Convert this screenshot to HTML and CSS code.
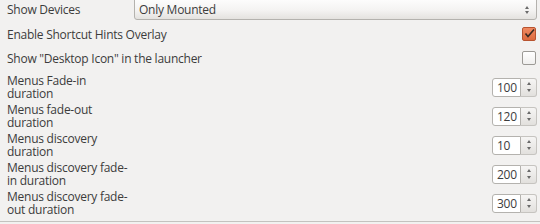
FILE: index.html
```html
<!DOCTYPE html>
<html lang="en">
<head>
    <meta charset="UTF-8">
    <title>Launcher settings</title>
    <link rel="stylesheet" href="styles.css">
</head>
<body>
    <div class="panel">

        <div class="row row-combo">
            <span class="label">Show Devices</span>
            <div class="combo">
                <span>Only Mounted</span>
                <span class="arrows"><i class="up"></i><i class="down"></i></span>
            </div>
        </div>

        <div class="row row-check">
            <span class="label wide">Enable Shortcut Hints Overlay</span>
            <span class="check on">
                <svg width="12" height="12" viewBox="0 0 12 12"><path d="M2.5 5.5 L5 8.5 L11 1.5" fill="none" stroke="#3a2a22" stroke-width="1.6"/></svg>
            </span>
        </div>

        <div class="row row-check">
            <span class="label wide">Show "Desktop Icon" in the launcher</span>
            <span class="check"></span>
        </div>

        <div class="row row-spin">
            <span class="label">Menus Fade-in duration</span>
            <div class="spin"><span class="val">100</span><span class="arrows"><i class="up"></i><i class="down"></i></span></div>
        </div>

        <div class="row row-spin">
            <span class="label">Menus fade-out duration</span>
            <div class="spin"><span class="val">120</span><span class="arrows"><i class="up"></i><i class="down"></i></span></div>
        </div>

        <div class="row row-spin">
            <span class="label">Menus discovery duration</span>
            <div class="spin"><span class="val">10</span><span class="arrows"><i class="up"></i><i class="down"></i></span></div>
        </div>

        <div class="row row-spin">
            <span class="label">Menus discovery fade-in duration</span>
            <div class="spin"><span class="val">200</span><span class="arrows"><i class="up"></i><i class="down"></i></span></div>
        </div>

        <div class="row row-spin">
            <span class="label">Menus discovery fade-out duration</span>
            <div class="spin"><span class="val">300</span><span class="arrows"><i class="up"></i><i class="down"></i></span></div>
        </div>

    </div>
</body>
</html>
```

FILE: styles.css
```css
body {
    margin: 0;
    background-color: #f2f1f0;
    font-family: "Open Sans", "DejaVu Sans", sans-serif;
    font-size: 12px;
    letter-spacing: -0.25px;
    color: #3c3c3c;
}

.panel {
    height: 221px;
    border-bottom: 1px solid #c4c2bf;
    padding: 0 3px 0 7px;
    overflow: hidden;
}

.row {
    display: flex;
    align-items: center;
    justify-content: space-between;
}

.label {
    width: 121px;
    line-height: 13px;
}

.label.wide {
    width: auto;
}

.row-combo {
    height: 22px;
    align-items: flex-start;
}

.row-combo .label {
    padding-top: 3px;
}

.row-check {
    height: 24px;
}

.row-spin {
    height: 29px;
}

.row-check + .row-spin {
    margin-top: 2px;
}

/* dropdown */
.combo {
    flex: 1;
    margin-left: 6px;
    margin-top: -4px;
    height: 24px;
    box-sizing: border-box;
    border: 1px solid #b4b2ae;
    border-radius: 3px;
    background: linear-gradient(#ffffff, #f4f3f2 60%, #e4e2df);
    display: flex;
    align-items: center;
    justify-content: space-between;
    padding: 3px 7px 0 4px;
}

.arrows {
    display: flex;
    flex-direction: column;
    align-items: center;
    gap: 2px;
}

.arrows i {
    display: block;
    width: 0;
    height: 0;
    border-left: 2.5px solid transparent;
    border-right: 2.5px solid transparent;
}

.arrows .up {
    border-bottom: 3px solid #6a6a6a;
}

.arrows .down {
    border-top: 3px solid #6a6a6a;
}

/* checkboxes */
.check {
    width: 14px;
    height: 14px;
    box-sizing: border-box;
    border: 1px solid #9c9a96;
    border-radius: 2px;
    background: linear-gradient(#ffffff, #f0efee);
    display: flex;
    align-items: center;
    justify-content: center;
    margin-right: 1px;
}

.check.on {
    border-color: #b8532f;
    background: linear-gradient(#ef8a62, #dd6a3e);
}

/* spin buttons */
.spin {
    display: flex;
    height: 19px;
    margin-top: 1px;
}

.spin .val {
    width: 29px;
    box-sizing: border-box;
    border: 1px solid #b4b2ae;
    border-radius: 3px 0 0 3px;
    background: #ffffff;
    padding: 1px 0 0 4px;
    line-height: 16px;
}

.spin .arrows {
    width: 16px;
    box-sizing: border-box;
    border: 1px solid #c6c4c0;
    border-left: none;
    border-radius: 0 3px 3px 0;
    background: linear-gradient(#f6f5f4, #e2e0dd);
    justify-content: center;
    gap: 4px;
}
```
